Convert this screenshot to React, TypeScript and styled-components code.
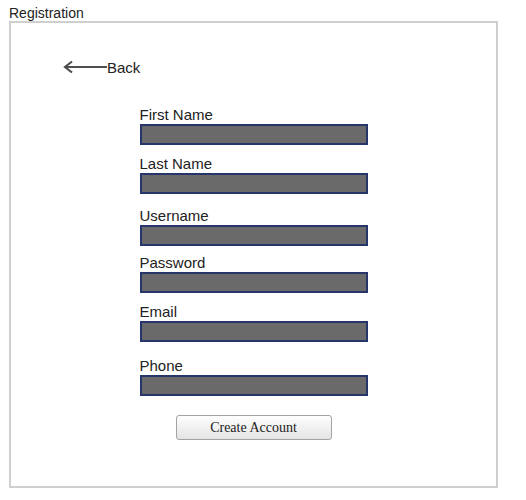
import * as React from 'react'
import styled, { createGlobalStyle } from 'styled-components'

const GlobalStyle = createGlobalStyle`
  html, body {
    margin: 0;
    padding: 0;
    background: #ffffff;
  }
  body {
    font-family: "Liberation Sans", Arial, sans-serif;
    color: #222222;
  }
`

const Page = styled.div`
  width: 526px;
  height: 500px;
  padding-left: 9px;
  box-sizing: border-box;
`

const Title = styled.div`
  font-size: 14px;
  line-height: 16px;
  padding-top: 5px;
  color: #222;
`

const Frame = styled.div`
  width: 489px;
  height: 467px;
  box-sizing: border-box;
  border: 2px solid #cfcfcf;
  display: flex;
  flex-direction: column;
  padding-top: 34px;
`

const BackLink = styled.a`
  display: flex;
  align-items: center;
  height: 20px;
  margin-left: 52px;
  font-size: 15px;
  color: #222;
  text-decoration: none;
  cursor: pointer;
`

const Form = styled.form`
  display: flex;
  flex-direction: column;
  align-items: center;
  margin-top: 30px;
`

const Field = styled.div<{ $gap: number }>`
  display: flex;
  flex-direction: column;
  width: 228px;
  margin-top: ${(p) => p.$gap}px;
`

const Label = styled.label`
  font-size: 15px;
  line-height: 16px;
  padding-bottom: 1px;
  color: #222;
`

const Input = styled.input`
  box-sizing: border-box;
  width: 228px;
  height: 21px;
  margin: 0;
  padding: 0 4px;
  border: 2px solid #26366a;
  background: #6a6a6a;
  outline: none;
`

const Button = styled.button`
  margin-top: 19px;
  width: 156px;
  height: 25px;
  box-sizing: border-box;
  border: 1px solid #a3a3a3;
  border-radius: 3px;
  background: linear-gradient(#fefefe, #e4e4e4);
  font-family: "Liberation Serif", "Times New Roman", serif;
  font-size: 14px;
  color: #222;
  padding: 0;
`

const fields = [
  { label: 'First Name', gap: 0, type: 'text' },
  { label: 'Last Name', gap: 11, type: 'text' },
  { label: 'Username', gap: 14, type: 'text' },
  { label: 'Password', gap: 9, type: 'password' },
  { label: 'Email', gap: 11, type: 'email' },
  { label: 'Phone', gap: 16, type: 'tel' },
]

const App: React.FC = () => {
  return (
    <Page>
      <GlobalStyle />
      <Title>Registration</Title>
      <Frame>
        <BackLink>
          <svg width="44" height="14" viewBox="0 0 44 14">
            <line x1="2" y1="7" x2="44" y2="7" stroke="#505050" strokeWidth="2.2" />
            <polyline points="9,1.5 2,7 9,12.5" fill="none" stroke="#505050" strokeWidth="2.2" />
          </svg>
          Back
        </BackLink>
        <Form onSubmit={(e) => e.preventDefault()}>
          {fields.map((f) => (
            <Field key={f.label} $gap={f.gap}>
              <Label>{f.label}</Label>
              <Input type={f.type} />
            </Field>
          ))}
          <Button type="submit">Create Account</Button>
        </Form>
      </Frame>
    </Page>
  )
}

export default App
